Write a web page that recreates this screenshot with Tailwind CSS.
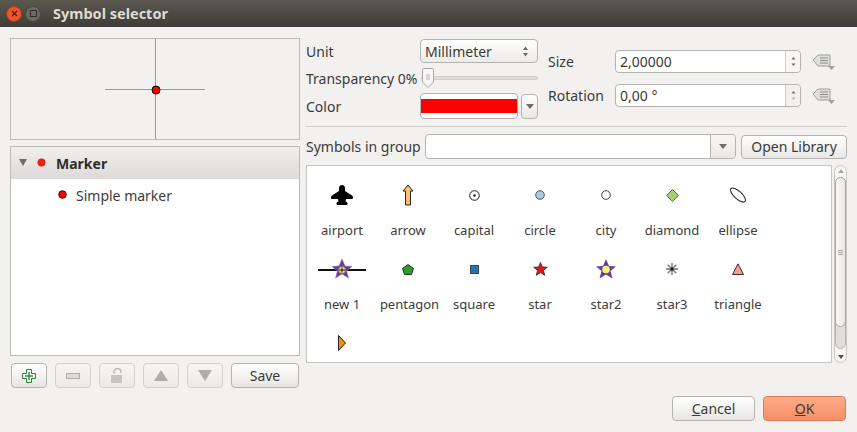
<!DOCTYPE html>
<html lang="en">
  <head>
    <meta charset="UTF-8" />
    <title>Symbol selector</title>
    <script src="https://cdn.jsdelivr.net/npm/@tailwindcss/browser@4"></script>
  </head>
  <body class="w-[857px] h-[432px] overflow-hidden bg-[#f2f1f0] text-[#3c3b37] text-[14px] font-['Noto_Sans',sans-serif]">
    <!-- title bar -->
    <header class="h-[27px] flex items-center pl-[6px] bg-gradient-to-b from-[#5b5950] to-[#3e3c37]">
      <div class="w-[16px] h-[16px] rounded-full bg-[#e9562a] border border-[#a83c1b] flex items-center justify-center">
        <svg width="7" height="7" viewBox="0 0 7 7"><path d="M1 1l5 5M6 1l-5 5" stroke="#5a1e0c" stroke-width="1.3" /></svg>
      </div>
      <div class="ml-[3px] w-[16px] h-[16px] rounded-full bg-[#6a6962] border border-[#4b4a44] flex items-center justify-center">
        <div class="w-[7px] h-[7px] border border-[#2f2e2a]"></div>
      </div>
      <h1 class="ml-[12px] text-[14.5px] font-bold text-[#dfdbd2]">Symbol selector</h1>
    </header>

    <main class="flex gap-[6px] pl-[10px] pr-[10px] pt-[11px]">
      <!-- left column -->
      <section class="w-[290px] flex flex-col">
        <div class="h-[102px] border border-[#bdbbb8] flex items-center justify-center">
          <svg width="100" height="100" viewBox="0 0 100 100">
            <path d="M0 50.500h100M50.500 0v100" stroke="#9a9a9a" stroke-width="1" />
            <circle cx="51" cy="51" r="4" fill="#f00" stroke="#000" stroke-width="1" />
          </svg>
        </div>
        <div class="mt-[6px] h-[210px] border border-[#bdbbb8] bg-white">
          <div class="h-[32px] flex items-center bg-gradient-to-b from-[#f0efee] to-[#dcdbd9] font-bold text-[#2f2e2b]">
            <svg class="ml-[8px] mt-[-2px]" width="8" height="7" viewBox="0 0 8 7"><path d="M0 0h8L4 7z" fill="#6e6e6a" /></svg>
            <svg class="ml-[10px] mt-[-2px]" width="9" height="9" viewBox="0 0 9 9"><circle cx="4.500" cy="4.500" r="3.800" fill="#f3200d" stroke="#b8331f" stroke-width=".6" /></svg>
            <span class="ml-[10px]">Marker</span>
          </div>
          <div class="h-[32px] flex items-center">
            <svg class="ml-[47px] mt-[-2px]" width="9" height="9" viewBox="0 0 9 9"><circle cx="4.500" cy="4.500" r="3.800" fill="#f00" stroke="#000" stroke-width=".8" /></svg>
            <span class="ml-[9px]">Simple marker</span>
          </div>
        </div>
        <div class="mt-[7px] flex pl-[1px] gap-[8px]">
          <button class="w-[36px] h-[25px] rounded-[4px] border border-[#b5b3af] bg-gradient-to-b from-white to-[#e6e5e3] flex items-center justify-center">
            <svg width="14" height="14" viewBox="0 0 14 14"><path d="M4.500 .5h5v4h4v5h-4v4h-5v-4h-4v-5h4z" fill="#eef6ee" stroke="#2f7d3a" stroke-width="1" /><path d="M7 3v8M3 7h8" stroke="#3d8a47" stroke-width="1.400" /></svg>
          </button>
          <button class="w-[36px] h-[25px] rounded-[4px] border border-[#d3d1ce] bg-gradient-to-b from-[#f6f5f4] to-[#ebeae8] flex items-center justify-center">
            <svg width="14" height="6" viewBox="0 0 14 6"><rect x=".5" y=".5" width="13" height="5" fill="#dcdcda" stroke="#adadaa" /></svg>
          </button>
          <button class="w-[36px] h-[25px] rounded-[4px] border border-[#d3d1ce] bg-gradient-to-b from-[#f6f5f4] to-[#ebeae8] flex items-center justify-center">
            <svg width="14" height="16" viewBox="0 0 14 16"><path d="M3 5.500V4a3.500 3.500 0 0 1 7 0v1" transform="translate(1 0)" fill="none" stroke="#b8b8b5" stroke-width="1.500" /><rect x="1" y="7" width="11" height="8" rx="1" fill="#c4c4c1" /></svg>
          </button>
          <button class="w-[36px] h-[25px] rounded-[4px] border border-[#d3d1ce] bg-gradient-to-b from-[#f6f5f4] to-[#ebeae8] flex items-center justify-center">
            <svg width="14" height="11" viewBox="0 0 14 11"><path d="M7 0l7 11H0z" fill="#adadaa" /></svg>
          </button>
          <button class="w-[36px] h-[25px] rounded-[4px] border border-[#d3d1ce] bg-gradient-to-b from-[#f6f5f4] to-[#ebeae8] flex items-center justify-center">
            <svg width="14" height="11" viewBox="0 0 14 11"><path d="M0 0h14L7 11z" fill="#adadaa" /></svg>
          </button>
          <button class="w-[68px] h-[25px] rounded-[4px] border border-[#b5b3af] bg-gradient-to-b from-white to-[#e6e5e3]">Save</button>
        </div>
      </section>

      <!-- right column -->
      <section class="flex-1 flex flex-col">
        <div class="flex h-[83px] mt-[-1px]">
          <div class="w-[232px] flex flex-col">
            <div class="h-[24px] mt-[2px] flex items-center">
              <span class="w-[114px]">Unit</span>
              <div class="w-[118px] h-[24px] rounded-[4px] border border-[#b5b3af] bg-gradient-to-b from-white to-[#ecebe9] flex items-center justify-between pl-[4px] pr-[8px]">
                <span>Millimeter</span>
                <svg width="7" height="13" viewBox="0 0 7 13"><path d="M3.500 1.500L6 5H1zM3.500 11.500L1 8h5z" fill="#6e6c67" /></svg>
              </div>
            </div>
            <div class="h-[24px] mt-[3px] flex items-center">
              <span class="w-[114px] whitespace-nowrap">Transparency 0%</span>
              <div class="relative w-[117px] h-[4px] ml-[1px] rounded-full bg-[#dddcda] border border-[#d0cfcc]">
                <svg class="absolute left-0 top-[-9px]" width="12" height="20" viewBox="0 0 12 20"><path d="M1.500 .5h9a1 1 0 0 1 1 1V14L6 19.500.5 14V1.500a1 1 0 0 1 1-1z" fill="#f7f6f5" stroke="#aaa8a4" /><path d="M4 7h4M4 9h4M4 11h4" stroke="#b8b6b2" /></svg>
              </div>
            </div>
            <div class="h-[26px] mt-[3px] flex items-center">
              <span class="w-[114px]">Color</span>
              <div class="w-[98px] h-[26px] rounded-[4px] border border-[#b5b3af] bg-white flex items-center overflow-hidden">
                <div class="w-full h-[14px] bg-[#f00]"></div>
              </div>
              <div class="ml-[3px] w-[17px] h-[25px] rounded-[4px] border border-[#b5b3af] bg-gradient-to-b from-white to-[#e8e7e5] flex items-center justify-center">
                <svg width="8" height="5" viewBox="0 0 8 5"><path d="M0 0h8L4 5z" fill="#6e6c67" /></svg>
              </div>
            </div>
          </div>
          <div class="ml-[10px] flex flex-col">
            <div class="h-[24px] mt-[12px] flex items-center">
              <span class="w-[67px]">Size</span>
              <div class="w-[186px] h-[23px] rounded-[4px] border border-[#b5b3af] bg-white flex items-center justify-between">
                <span class="ml-[4px]">2,00000</span>
                <div class="w-[15px] h-full border-l border-[#d0cfcc] bg-[#f7f6f5] rounded-r-[4px] flex items-center justify-center">
                  <svg width="7" height="13" viewBox="0 0 7 13"><path d="M3.500 2L5.500 4.500h-4zM3.500 11L1.500 8.500h4z" fill="#6e6c67" /></svg>
                </div>
              </div>
              <svg class="ml-[11px]" width="23" height="18" viewBox="0 0 23 18"><path d="M1 8l5-5h12v11H6z" fill="#dfdfdd" stroke="#9d9d9a" /><path d="M8 6h8M8 8.500h8M8 11h8" stroke="#8d8d8a" /><path d="M16 14h7l-3.500 4z" fill="#a0a09d" /></svg>
            </div>
            <div class="h-[24px] mt-[10px] flex items-center">
              <span class="w-[67px]">Rotation</span>
              <div class="w-[186px] h-[23px] rounded-[4px] border border-[#b5b3af] bg-white flex items-center justify-between">
                <span class="ml-[4px]">0,00 °</span>
                <div class="w-[15px] h-full border-l border-[#d0cfcc] bg-[#f1f0ef] rounded-r-[4px] flex items-center justify-center">
                  <svg width="7" height="13" viewBox="0 0 7 13"><path d="M3.500 2L5.500 4.500h-4z" fill="#6e6c67" /><path d="M3.500 11L1.500 8.500h4z" fill="#b8b6b2" /></svg>
                </div>
              </div>
              <svg class="ml-[11px]" width="23" height="18" viewBox="0 0 23 18"><path d="M1 8l5-5h12v11H6z" fill="#dfdfdd" stroke="#9d9d9a" /><path d="M8 6h8M8 8.500h8M8 11h8" stroke="#8d8d8a" /><path d="M16 14h7l-3.500 4z" fill="#a0a09d" /></svg>
            </div>
          </div>
        </div>

        <hr class="mt-[6px] border-t border-[#cfcdca]" />

        <div class="mt-[7px] h-[25px] flex items-center">
          <span class="w-[119px] whitespace-nowrap">Symbols in group</span>
          <div class="w-[311px] h-[25px] rounded-[4px] border border-[#b5b3af] bg-white flex justify-end">
            <div class="w-[25px] h-full border-l border-[#b5b3af] bg-gradient-to-b from-[#f8f7f6] to-[#e8e7e5] rounded-r-[4px] flex items-center justify-center">
              <svg width="8" height="5" viewBox="0 0 8 5"><path d="M0 0h8L4 5z" fill="#6e6c67" /></svg>
            </div>
          </div>
          <button class="ml-[5px] w-[106px] h-[24px] rounded-[4px] border border-[#b5b3af] bg-gradient-to-b from-white to-[#e8e7e5]">Open Library</button>
        </div>

        <div class="mt-[6px] flex gap-[2px]">
          <div class="w-[526px] h-[198px] border border-[#c8c6c2] bg-white pl-[2px] pt-[5px] overflow-hidden">
            <div class="grid grid-cols-[repeat(7,66px)] auto-rows-[74px] text-[13px] text-center">
              <div class="flex flex-col items-center">
                <div class="h-[48px] flex items-center justify-center"><svg width="22" height="20" viewBox="0 0 22 20"><path d="M11 0c2 0 3 1.500 3 3.500V6l7 4.500c1.500 1 1.500 3.500-.5 3.500H15l-.5 2.500c1.500 0 2 1 2 2s-.5 1.500-1.500 1.500H7c-1 0-1.500-.5-1.500-1.500s.5-2 2-2L7 14H1.500C-.5 14-.5 11.500 1 10.500L8 6V3.500C8 1.500 9 0 11 0z" fill="#000" /></svg></div>
                <span class="mt-[2px]">airport</span>
              </div>
              <div class="flex flex-col items-center">
                <div class="h-[48px] flex items-center justify-center"><svg width="12" height="22" viewBox="0 0 12 22"><path d="M6 1l5 6H8.500v14h-5V7H1z" fill="#fdbf6f" stroke="#222" stroke-width="1" /></svg></div>
                <span class="mt-[2px]">arrow</span>
              </div>
              <div class="flex flex-col items-center">
                <div class="h-[48px] flex items-center justify-center"><svg width="11" height="11" viewBox="0 0 11 11"><circle cx="5.500" cy="5.500" r="4.800" fill="#fff" stroke="#222" /><circle cx="5.500" cy="5.500" r="1.200" fill="#222" /></svg></div>
                <span class="mt-[2px]">capital</span>
              </div>
              <div class="flex flex-col items-center">
                <div class="h-[48px] flex items-center justify-center"><svg width="10" height="10" viewBox="0 0 10 10"><circle cx="5" cy="5" r="4.300" fill="#a6cee3" stroke="#555" /></svg></div>
                <span class="mt-[2px]">circle</span>
              </div>
              <div class="flex flex-col items-center">
                <div class="h-[48px] flex items-center justify-center"><svg width="10" height="10" viewBox="0 0 10 10"><circle cx="5" cy="5" r="4.300" fill="#fff" stroke="#444" /></svg></div>
                <span class="mt-[2px]">city</span>
              </div>
              <div class="flex flex-col items-center">
                <div class="h-[48px] flex items-center justify-center"><svg width="13" height="13" viewBox="0 0 13 13"><path d="M6.500 .5l6 6-6 6-6-6z" fill="#a2d077" stroke="#666" /></svg></div>
                <span class="mt-[2px]">diamond</span>
              </div>
              <div class="flex flex-col items-center">
                <div class="h-[48px] flex items-center justify-center"><svg width="18" height="18" viewBox="0 0 18 18"><ellipse cx="9" cy="9" rx="9.500" ry="3.800" transform="rotate(42 9 9)" fill="#fff" stroke="#222" /></svg></div>
                <span class="mt-[2px]">ellipse</span>
              </div>

              <div class="flex flex-col items-center">
                <div class="h-[48px] flex items-center justify-center">
                  <svg width="48" height="22" viewBox="0 0 48 22"><path d="M0 12h48" stroke="#111" stroke-width="2" /><path d="M24 1l3 7 7 .5-5.500 4.500 2 7-6.500-4-6.500 4 2-7L14 8.500 21 8z" fill="#6a3d9a" stroke="#8c6bb5" stroke-width=".6" /><circle cx="24" cy="12" r="3.500" fill="#f3f07a" stroke="#555" stroke-width=".5" /><path d="M21 12h6M24 9.500v5" stroke="#111" stroke-width="1" /></svg>
                </div>
                <span class="mt-[2px]">new 1</span>
              </div>
              <div class="flex flex-col items-center">
                <div class="h-[48px] flex items-center justify-center"><svg width="12" height="11" viewBox="0 0 12 11"><path d="M6 .5l5.500 4-2 6h-7l-2-6z" fill="#2f9b2f" stroke="#1e3d1e" /></svg></div>
                <span class="mt-[2px] ml-[3px]">pentagon</span>
              </div>
              <div class="flex flex-col items-center">
                <div class="h-[48px] flex items-center justify-center"><svg width="9" height="9" viewBox="0 0 9 9"><rect x=".5" y=".5" width="8" height="8" fill="#1f78b4" stroke="#444" /></svg></div>
                <span class="mt-[2px]">square</span>
              </div>
              <div class="flex flex-col items-center">
                <div class="h-[48px] flex items-center justify-center"><svg width="15" height="14" viewBox="0 0 15 14"><path d="M7.500 .5l1.800 4.500 5 .3-3.900 3.100 1.300 4.900-4.200-2.700-4.200 2.700 1.300-4.900L.7 5.300l5-.3z" fill="#e31a1c" stroke="#222" stroke-width=".8" /></svg></div>
                <span class="mt-[2px]">star</span>
              </div>
              <div class="flex flex-col items-center">
                <div class="h-[48px] flex items-center justify-center"><svg width="20" height="20" viewBox="0 0 20 20"><path d="M10 0l3 7 7 .5-5.500 4.500 2 7.500-6.500-4-6.500 4 2-7.500L0 7.500 7 7z" fill="#6a3d9a" /><circle cx="10" cy="10.500" r="3.800" fill="#f5f07a" /></svg></div>
                <span class="mt-[2px]">star2</span>
              </div>
              <div class="flex flex-col items-center">
                <div class="h-[48px] flex items-center justify-center"><svg width="12" height="12" viewBox="0 0 12 12"><path d="M6 0v12M0 6h12M1.800 1.800l8.400 8.400M10.200 1.800l-8.400 8.400" stroke="#777" stroke-width="1.400" /><circle cx="6" cy="6" r="1.500" fill="#111" /></svg></div>
                <span class="mt-[2px]">star3</span>
              </div>
              <div class="flex flex-col items-center">
                <div class="h-[48px] flex items-center justify-center"><svg width="12" height="12" viewBox="0 0 12 12"><path d="M6 .8l5.500 10.700H.5z" fill="#fb9a99" stroke="#333" /></svg></div>
                <span class="mt-[2px]">triangle</span>
              </div>

              <div class="flex flex-col items-center">
                <div class="h-[48px] flex items-center justify-center"><svg width="8" height="16" viewBox="0 0 8 16"><path d="M.5 .5L7.500 8 .5 15.500z" fill="#ff8c00" stroke="#222" /></svg></div>
              </div>
            </div>
          </div>
          <!-- scrollbar: white end caps, grey trough, thumb on top -->
          <div class="relative w-[13px] h-[198px] rounded-full border border-[#c8c6c2] bg-[#f7f6f5]">
            <svg class="absolute left-[3px] top-[3px]" width="6" height="4" viewBox="0 0 6 4"><path d="M3 0l3 4H0z" fill="#aaa8a4" /></svg>
            <div class="absolute left-0 top-[11px] w-[11px] h-[172px] rounded-full border border-[#b5b3af] bg-[#dfdedc]"></div>
            <div class="absolute left-0 top-[11px] w-[11px] h-[150px] rounded-full border border-[#aaa8a4] bg-gradient-to-r from-[#fafafa] to-[#e8e7e5] flex flex-col items-center justify-center gap-[1px]">
              <div class="w-[5px] h-px bg-[#aaa8a4]"></div>
              <div class="w-[5px] h-px bg-[#aaa8a4]"></div>
              <div class="w-[5px] h-px bg-[#aaa8a4]"></div>
            </div>
            <svg class="absolute left-[3px] bottom-[3px]" width="6" height="4" viewBox="0 0 6 4"><path d="M0 0h6L3 4z" fill="#4f4d48" /></svg>
          </div>
        </div>
      </section>
    </main>

    <footer class="mt-[8px] flex justify-end gap-[8px] pr-[11px]">
      <button class="w-[83px] h-[25px] rounded-[4px] border border-[#b5b3af] bg-gradient-to-b from-white to-[#e8e7e5]"><span class="underline">C</span>ancel</button>
      <button class="w-[83px] h-[25px] rounded-[4px] border border-[#d57f5e] bg-gradient-to-b from-[#fdab88] to-[#f58f65]"><span class="underline">O</span>K</button>
    </footer>
  </body>
</html>
